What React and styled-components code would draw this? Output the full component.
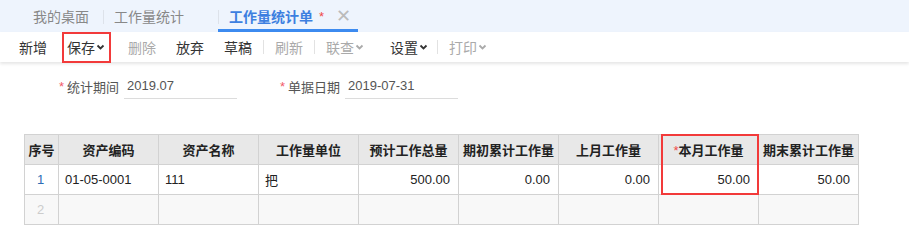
import React from "react";
import styled, { createGlobalStyle } from "styled-components";

const GlobalStyle = createGlobalStyle`
  body {
    margin: 0;
    background: #fff;
    font-family: "Liberation Sans", "Noto Sans CJK SC", sans-serif;
    color: #333;
  }
`;

const Page = styled.div`
  width: 909px;
  height: 225px;
  overflow: hidden;
`;

const TabBar = styled.div`
  display: flex;
  height: 32px;
  padding-left: 22px;
  background: #eef4fd;
  box-sizing: border-box;
`;

const Tab = styled.div`
  position: relative;
  display: flex;
  align-items: center;
  width: ${props => props.w}px;
  padding-left: 11px;
  box-sizing: border-box;
  font-size: 14px;
  color: ${props => (props.active ? "#3d7fe0" : "#888")};
  font-weight: ${props => (props.active ? "bold" : "normal")};
  border-bottom: 3px solid ${props => (props.active ? "#3d8bf0" : "transparent")};
  padding-top: 3px;
  &::before {
    content: "";
    display: ${props => (props.first ? "none" : "block")};
    position: absolute;
    left: 0;
    top: 10px;
    height: 14px;
    border-left: 1px solid #dde2ea;
  }
`;

const Star = styled.span`
  color: #f04848;
  font-weight: normal;
  margin-left: 6px;
  font-size: 13px;
`;

const Close = styled.span`
  margin-left: 12px;
  color: #bbb;
  font-size: 18px;
  font-weight: normal;
`;

const Toolbar = styled.div`
  display: flex;
  align-items: center;
  height: 30px;
  padding-left: 9px;
  background: #fff;
  box-shadow: 0 2px 3px rgba(0, 0, 0, 0.1);
  position: relative;
`;

const Btn = styled.div`
  position: relative;
  display: flex;
  align-items: center;
  height: 30px;
  padding: 0 ${props => props.pr || 10}px 0 10px;
  font-size: 14px;
  color: ${props => (props.disabled ? "#aaa" : "#333")};
`;

const Mark = styled.div`
  position: absolute;
  left: 5px;
  right: 7px;
  top: 0;
  bottom: -1px;
  border: 2px solid #f23a3a;
`;

const Sep = styled.div`
  width: 1px;
  height: 14px;
  background: #e2e2e2;
  margin: 0 1px;
`;

const Chevron = ({ color }) => (
  <svg width="9" height="6" viewBox="0 0 9 6" style={{ marginLeft: 1 }}>
    <polyline points="1.5,1.5 4.5,4.5 7.5,1.5" fill="none" stroke={color} strokeWidth="1.8" />
  </svg>
);

const Form = styled.div`
  display: flex;
  gap: 43px;
  padding: 11px 0 0 59px;
  height: 72px;
  box-sizing: border-box;
`;

const Field = styled.div`
  display: flex;
  align-items: center;
  height: 26px;
  font-size: 13px;
`;

const Req = styled.span`
  color: #f25a6a;
  width: 8px;
`;

const Label = styled.span`
  color: #555;
  width: 52px;
  margin-right: 5px;
`;

const Input = styled.div`
  width: 110px;
  height: 25px;
  line-height: 25px;
  padding-left: 3px;
  border-bottom: 1px solid #dcdcdc;
  color: #555;
`;

const TableWrap = styled.div`
  position: relative;
  margin-left: 24px;
  width: 835px;
`;

const Grid = styled.table`
  border-collapse: collapse;
  table-layout: fixed;
  font-size: 13px;
`;

const Th = styled.th`
  height: 29px;
  padding: 0;
  background: #e8e8e8;
  border: 1px solid #d2d2d2;
  color: #222;
  font-weight: bold;
  white-space: nowrap;
  text-align: center;
`;

const Td = styled.td`
  height: 29px;
  padding: 0 8px 0 6px;
  border: 1px solid #d2d2d2;
  background: ${props => (props.empty ? "#f8f8f8" : "#fff")};
  text-align: ${props => props.align || "left"};
  color: ${props => props.color || "#222"};
  white-space: nowrap;
`;

const HeadStar = styled.span`
  color: #f04848;
  font-weight: normal;
`;

const Highlight = styled.div`
  position: absolute;
  left: 637px;
  top: 0;
  width: 94px;
  height: 57px;
  border: 2px solid #f23a3a;
  pointer-events: none;
`;

const widths = [34, 100, 100, 100, 100, 100, 100, 100, 100];
const heads = ["序号", "资产编码", "资产名称", "工作量单位", "预计工作总量", "期初累计工作量", "上月工作量", "本月工作量", "期末累计工作量"];

export default function App() {
  return (
    <Page>
      <GlobalStyle />
      <TabBar>
        <Tab first w={81}>我的桌面</Tab>
        <Tab w={115}>工作量统计</Tab>
        <Tab active w={140}>
          工作量统计单<Star>*</Star>
          <Close>✕</Close>
        </Tab>
      </TabBar>
      <Toolbar>
        <Btn>新增</Btn>
        <Btn pr={13}>
          保存<Chevron color="#333" />
          <Mark />
        </Btn>
        <Btn disabled>删除</Btn>
        <Btn>放弃</Btn>
        <Btn>草稿</Btn>
        <Sep />
        <Btn disabled>刷新</Btn>
        <Sep />
        <Btn disabled pr={16}>
          联查<Chevron color="#aaa" />
        </Btn>
        <Btn pr={8}>
          设置<Chevron color="#333" />
        </Btn>
        <Sep />
        <Btn disabled>
          打印<Chevron color="#aaa" />
        </Btn>
      </Toolbar>
      <Form>
        <Field>
          <Req>*</Req>
          <Label>统计期间</Label>
          <Input>2019.07</Input>
        </Field>
        <Field>
          <Req>*</Req>
          <Label>单据日期</Label>
          <Input>2019-07-31</Input>
        </Field>
      </Form>
      <TableWrap>
        <Grid>
          <colgroup>
            {widths.map((w, i) => (
              <col key={i} style={{ width: w }} />
            ))}
          </colgroup>
          <thead>
            <tr>
              {heads.map((h, i) => (
                <Th key={h}>
                  {i === 7 && <HeadStar>*</HeadStar>}
                  {h}
                </Th>
              ))}
            </tr>
          </thead>
          <tbody>
            <tr>
              <Td align="center" color="#2d6db5">1</Td>
              <Td>01-05-0001</Td>
              <Td>111</Td>
              <Td>把</Td>
              <Td align="right">500.00</Td>
              <Td align="right">0.00</Td>
              <Td align="right">0.00</Td>
              <Td align="right">50.00</Td>
              <Td align="right">50.00</Td>
            </tr>
            <tr>
              <Td empty align="center" color="#ccc">2</Td>
              {widths.slice(1).map((w, i) => (
                <Td empty key={i} />
              ))}
            </tr>
          </tbody>
        </Grid>
        <Highlight />
      </TableWrap>
    </Page>
  );
}
